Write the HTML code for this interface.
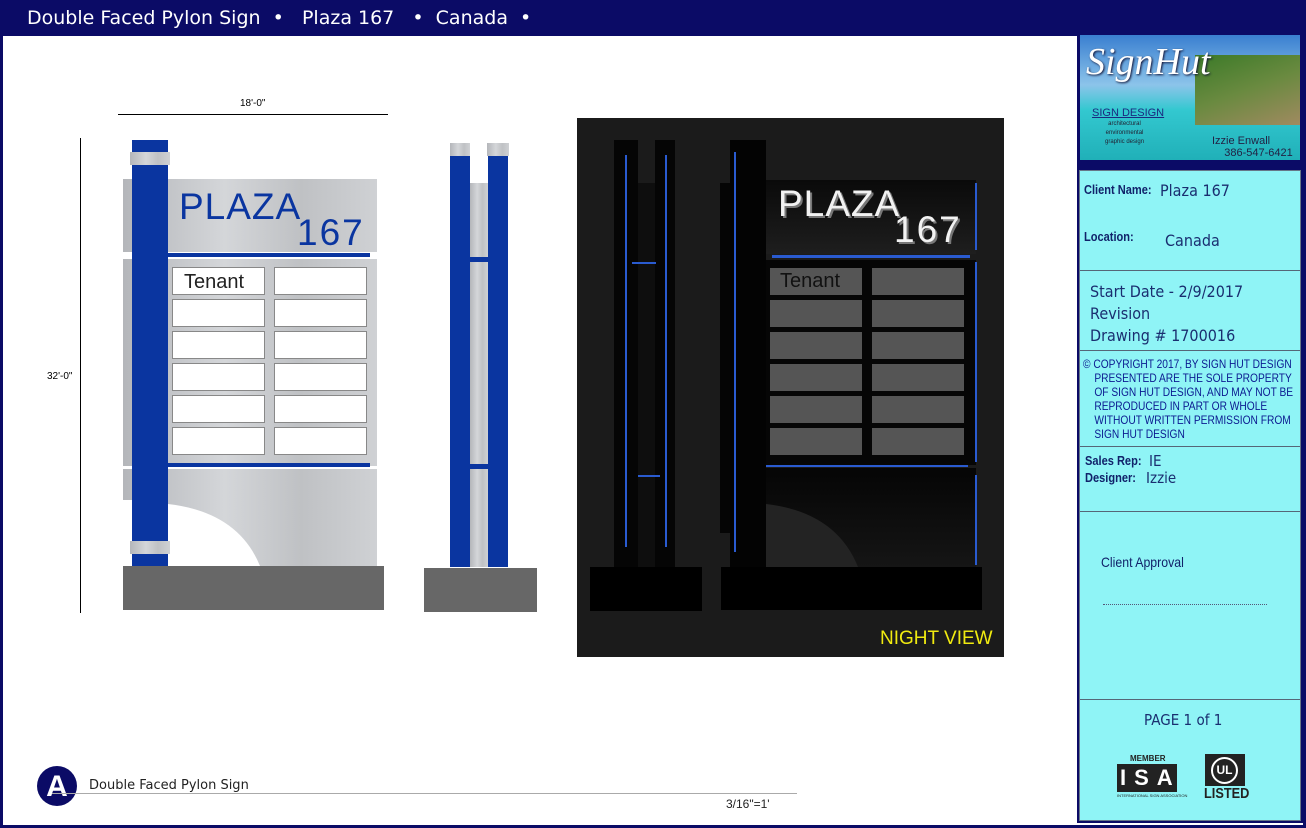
<!DOCTYPE html>
<html><head><meta charset="utf-8"><style>
*{margin:0;padding:0;box-sizing:border-box}
body{width:1306px;height:828px;position:relative;background:#fff;font-family:"Liberation Sans",sans-serif;overflow:hidden}
.a{position:absolute}
.steel{background:linear-gradient(90deg,#b4b6ba,#d4d6d9 40%,#bfc1c4 70%,#cfd1d4)}
.blue{background:#0a35a0}
.tb{position:absolute;background:#fff;border:1px solid #888;width:93px;height:28px}
.nb{position:absolute;background:#555;width:92px;height:27px}
.hand{font-family:"DejaVu Sans",sans-serif;color:#1a2e70;transform:scaleX(.9);transform-origin:left}
</style></head><body>
<div class="a" style="left:0;top:0;width:1306px;height:828px;border:3px solid #0b0b66"></div>
<div class="a" style="left:0;top:0;width:1306px;height:36px;background:#0b0b66;color:#fff;font-size:19px;line-height:36px;padding-left:27px;font-family:'DejaVu Sans',sans-serif">Double Faced Pylon Sign &nbsp;•&nbsp;&nbsp; Plaza 167 &nbsp;&nbsp;•&nbsp; Canada &nbsp;•</div>

<div class="a" style="left:118px;top:114px;width:270px;height:1px;background:#000"></div>
<div class="a" style="left:240px;top:98px;font-size:10px">18'-0"</div>
<div class="a" style="left:80px;top:138px;width:1px;height:475px;background:#000"></div>
<div class="a" style="left:47px;top:371px;font-size:10px">32'-0"</div>

<div class="a steel" style="left:123px;top:179px;width:254px;height:73px"></div>
<div class="a" style="left:179px;top:186px;font-size:37px;color:#0a35a0;letter-spacing:1px">PLAZA</div>
<div class="a" style="left:297px;top:212px;font-size:37px;color:#0a35a0;letter-spacing:2px">167</div>
<div class="a blue" style="left:168px;top:253px;width:202px;height:4px"></div>
<div class="a steel" style="left:123px;top:259px;width:254px;height:207px"></div>
<div class="tb" style="left:172px;top:267px;font-size:20px;color:#222;padding-left:11px;line-height:28px">Tenant</div>
<div class="tb" style="left:274px;top:267px"></div>
<div class="tb" style="left:172px;top:299px"></div><div class="tb" style="left:274px;top:299px"></div>
<div class="tb" style="left:172px;top:331px"></div><div class="tb" style="left:274px;top:331px"></div>
<div class="tb" style="left:172px;top:363px"></div><div class="tb" style="left:274px;top:363px"></div>
<div class="tb" style="left:172px;top:395px"></div><div class="tb" style="left:274px;top:395px"></div>
<div class="tb" style="left:172px;top:427px"></div><div class="tb" style="left:274px;top:427px"></div>
<div class="a blue" style="left:168px;top:463px;width:202px;height:4px"></div>
<div class="a steel" style="left:123px;top:469px;width:254px;height:97px"></div>
<div class="a" style="left:123px;top:500px;width:9px;height:66px;background:#fff"></div>
<svg class="a" style="left:168px;top:504px" width="92" height="62"><path d="M0 0 Q70 8 92 62 L0 62Z" fill="#fff"/></svg>
<div class="a blue" style="left:132px;top:140px;width:36px;height:427px"></div>
<div class="a steel" style="left:130px;top:152px;width:40px;height:13px"></div>
<div class="a steel" style="left:130px;top:541px;width:40px;height:13px"></div>
<div class="a" style="left:123px;top:566px;width:261px;height:44px;background:#676767"></div>

<div class="a steel" style="left:470px;top:183px;width:18px;height:384px"></div>
<div class="a blue" style="left:450px;top:143px;width:20px;height:424px"></div>
<div class="a blue" style="left:488px;top:143px;width:20px;height:424px"></div>
<div class="a steel" style="left:450px;top:143px;width:20px;height:13px"></div>
<div class="a steel" style="left:487px;top:143px;width:22px;height:13px"></div>
<div class="a blue" style="left:470px;top:257px;width:18px;height:5px"></div>
<div class="a blue" style="left:470px;top:464px;width:18px;height:5px"></div>
<div class="a" style="left:424px;top:568px;width:113px;height:44px;background:#676767"></div>

<div class="a" style="left:577px;top:118px;width:427px;height:539px;background:#1b1b1b"></div>
<div class="a" style="left:614px;top:140px;width:24px;height:427px;background:#050505"></div>
<div class="a" style="left:655px;top:140px;width:20px;height:427px;background:#050505"></div>
<div class="a" style="left:638px;top:183px;width:17px;height:384px;background:#0e0e0e"></div>
<div class="a" style="left:625px;top:155px;width:2px;height:392px;background:#2a5bd0"></div>
<div class="a" style="left:665px;top:155px;width:2px;height:392px;background:#2a5bd0"></div>
<div class="a" style="left:632px;top:262px;width:24px;height:2px;background:#2a5bd0"></div>
<div class="a" style="left:638px;top:475px;width:22px;height:2px;background:#2a5bd0"></div>
<div class="a" style="left:590px;top:567px;width:112px;height:44px;background:#000"></div>

<div class="a" style="left:766px;top:180px;width:210px;height:74px;background:linear-gradient(180deg,#0a0a0a,#1e1e1e)"></div>
<div class="a" style="left:778px;top:183px;font-size:37px;color:#f2f2f2;letter-spacing:1px;text-shadow:2px 2px 0 #777">PLAZA</div>
<div class="a" style="left:894px;top:209px;font-size:37px;color:#f2f2f2;letter-spacing:2px;text-shadow:2px 2px 0 #777">167</div>
<div class="a" style="left:772px;top:255px;width:198px;height:3px;background:#2a5bd0"></div>
<div class="a" style="left:766px;top:260px;width:210px;height:205px;background:#060606"></div>
<div class="nb" style="left:770px;top:268px;font-size:20px;color:#111;padding-left:10px;line-height:27px">Tenant</div>
<div class="nb" style="left:872px;top:268px"></div>
<div class="nb" style="left:770px;top:300px"></div><div class="nb" style="left:872px;top:300px"></div>
<div class="nb" style="left:770px;top:332px"></div><div class="nb" style="left:872px;top:332px"></div>
<div class="nb" style="left:770px;top:364px"></div><div class="nb" style="left:872px;top:364px"></div>
<div class="nb" style="left:770px;top:396px"></div><div class="nb" style="left:872px;top:396px"></div>
<div class="nb" style="left:770px;top:428px"></div><div class="nb" style="left:872px;top:428px"></div>
<div class="a" style="left:764px;top:465px;width:204px;height:2px;background:#2a5bd0"></div>
<div class="a" style="left:766px;top:468px;width:210px;height:99px;background:linear-gradient(180deg,#050505,#151515)"></div>
<svg class="a" style="left:766px;top:504px" width="92" height="63"><path d="M0 0 Q70 8 92 63 L0 63Z" fill="#232323"/></svg>
<div class="a" style="left:720px;top:183px;width:12px;height:350px;background:#050505"></div>
<div class="a" style="left:730px;top:140px;width:36px;height:427px;background:#030303"></div>
<div class="a" style="left:734px;top:152px;width:2px;height:400px;background:#2a5bd0"></div>
<div class="a" style="left:975px;top:183px;width:2px;height:67px;background:#2a5bd0"></div>
<div class="a" style="left:975px;top:262px;width:2px;height:200px;background:#2a5bd0"></div>
<div class="a" style="left:975px;top:475px;width:2px;height:90px;background:#2a5bd0"></div>
<div class="a" style="left:721px;top:567px;width:261px;height:43px;background:#000"></div>
<div class="a" style="left:880px;top:628px;font-size:19px;color:#f0ea10">NIGHT VIEW</div>

<div class="a" style="left:37px;top:766px;width:40px;height:40px;border-radius:50%;background:#0b0b66;color:#fff;font-size:30px;font-weight:bold;text-align:center;line-height:42px">A</div>
<div class="a" style="left:89px;top:778px;font-size:13px;color:#222;font-family:'DejaVu Sans',sans-serif">Double Faced Pylon Sign</div>
<div class="a" style="left:52px;top:793px;width:745px;height:1px;background:#aaa"></div>
<div class="a" style="left:726px;top:797px;font-size:12px;color:#222">3/16"=1'</div>

<div class="a" style="left:1077px;top:33px;width:226px;height:790px;background:#0b0b66"></div>
<div class="a" style="left:1079px;top:170px;width:222px;height:651px;background:#8ff4f6;border:1px solid #678"></div>
<div class="a" style="left:1080px;top:35px;width:220px;height:125px;background:linear-gradient(180deg,#3a7fd0 0%,#8cc4ea 40%,#33c8d0 60%,#20b0b8 100%)"></div>
<div class="a" style="left:1195px;top:55px;width:105px;height:70px;background:linear-gradient(160deg,#3b7a28,#6a8a40 50%,#a08a60)"></div>
<div class="a" style="left:1086px;top:40px;font-size:38px;color:#fff;font-family:'Liberation Serif',serif;font-style:italic;text-shadow:1px 1px 2px #113">SignHut</div>
<div class="a" style="left:1092px;top:107px;font-size:11px;color:#1a2a80;text-decoration:underline">SIGN DESIGN</div>
<div class="a" style="left:1105px;top:120px;font-size:6px;color:#223;line-height:9px;text-align:center">architectural<br>environmental<br>graphic design</div>
<div class="a" style="left:1212px;top:135px;font-size:11px;color:#224;line-height:12px">Izzie Enwall<br>&nbsp;&nbsp;&nbsp;&nbsp;386-547-6421</div>

<div class="a" style="left:1084px;top:182px;font-size:13px;font-weight:bold;color:#11226a;transform:scaleX(.85);transform-origin:left">Client Name:</div>
<div class="a hand" style="left:1160px;top:181px;font-size:16px">Plaza 167</div>
<div class="a" style="left:1084px;top:229px;font-size:13px;font-weight:bold;color:#11226a;transform:scaleX(.85);transform-origin:left">Location:</div>
<div class="a hand" style="left:1165px;top:231px;font-size:16px">Canada</div>
<div class="a" style="left:1080px;top:270px;width:220px;height:1px;background:#567"></div>
<div class="a hand" style="left:1090px;top:281px;font-size:16px;line-height:22px">Start Date - 2/9/2017<br>Revision<br>Drawing # 1700016</div>
<div class="a" style="left:1080px;top:350px;width:220px;height:1px;background:#567"></div>
<div class="a" style="left:1083px;top:357px;font-size:12px;color:#0b1a90;line-height:14px;transform:scaleX(.85);transform-origin:left;white-space:nowrap">© COPYRIGHT 2017, BY SIGN HUT DESIGN<br>&nbsp;&nbsp;&nbsp;&nbsp;PRESENTED ARE THE SOLE PROPERTY<br>&nbsp;&nbsp;&nbsp;&nbsp;OF SIGN HUT DESIGN, AND MAY NOT BE<br>&nbsp;&nbsp;&nbsp;&nbsp;REPRODUCED IN PART OR WHOLE<br>&nbsp;&nbsp;&nbsp;&nbsp;WITHOUT WRITTEN PERMISSION FROM<br>&nbsp;&nbsp;&nbsp;&nbsp;SIGN HUT DESIGN</div>
<div class="a" style="left:1080px;top:446px;width:220px;height:1px;background:#567"></div>
<div class="a" style="left:1085px;top:453px;font-size:13px;font-weight:bold;color:#11226a;transform:scaleX(.85);transform-origin:left">Sales Rep:</div>
<div class="a hand" style="left:1149px;top:452px;font-size:15px">IE</div>
<div class="a" style="left:1085px;top:470px;font-size:13px;font-weight:bold;color:#11226a;transform:scaleX(.85);transform-origin:left">Designer:</div>
<div class="a hand" style="left:1146px;top:469px;font-size:15px">Izzie</div>
<div class="a" style="left:1080px;top:511px;width:220px;height:1px;background:#567"></div>
<div class="a" style="left:1101px;top:554px;font-size:14px;color:#11226a;transform:scaleX(.88);transform-origin:left">Client Approval</div>
<div class="a" style="left:1103px;top:604px;width:164px;border-top:1px dotted #557"></div>
<div class="a" style="left:1080px;top:699px;width:220px;height:1px;background:#567"></div>
<div class="a hand" style="left:1144px;top:711px;font-size:15px">PAGE 1 of 1</div>
<div class="a" style="left:1130px;top:754px;font-size:8px;font-weight:bold;color:#222">MEMBER</div>
<div class="a" style="left:1117px;top:764px;font-size:22px;font-weight:bold;color:#fff;letter-spacing:8px;background:#222;width:60px;height:28px;line-height:28px;padding-left:3px">ISA</div>
<div class="a" style="left:1117px;top:793px;font-size:4px;color:#222">INTERNATIONAL SIGN ASSOCIATION</div>
<div class="a" style="left:1205px;top:754px;width:40px;height:32px;background:#222"></div>
<div class="a" style="left:1211px;top:757px;width:27px;height:27px;border-radius:50%;border:2px solid #fff;color:#fff;font-size:12px;font-weight:bold;text-align:center;line-height:23px">UL</div>
<div class="a" style="left:1204px;top:785px;font-size:15px;font-weight:bold;color:#222;transform:scaleX(.85);transform-origin:left">LISTED</div>
</body></html>
